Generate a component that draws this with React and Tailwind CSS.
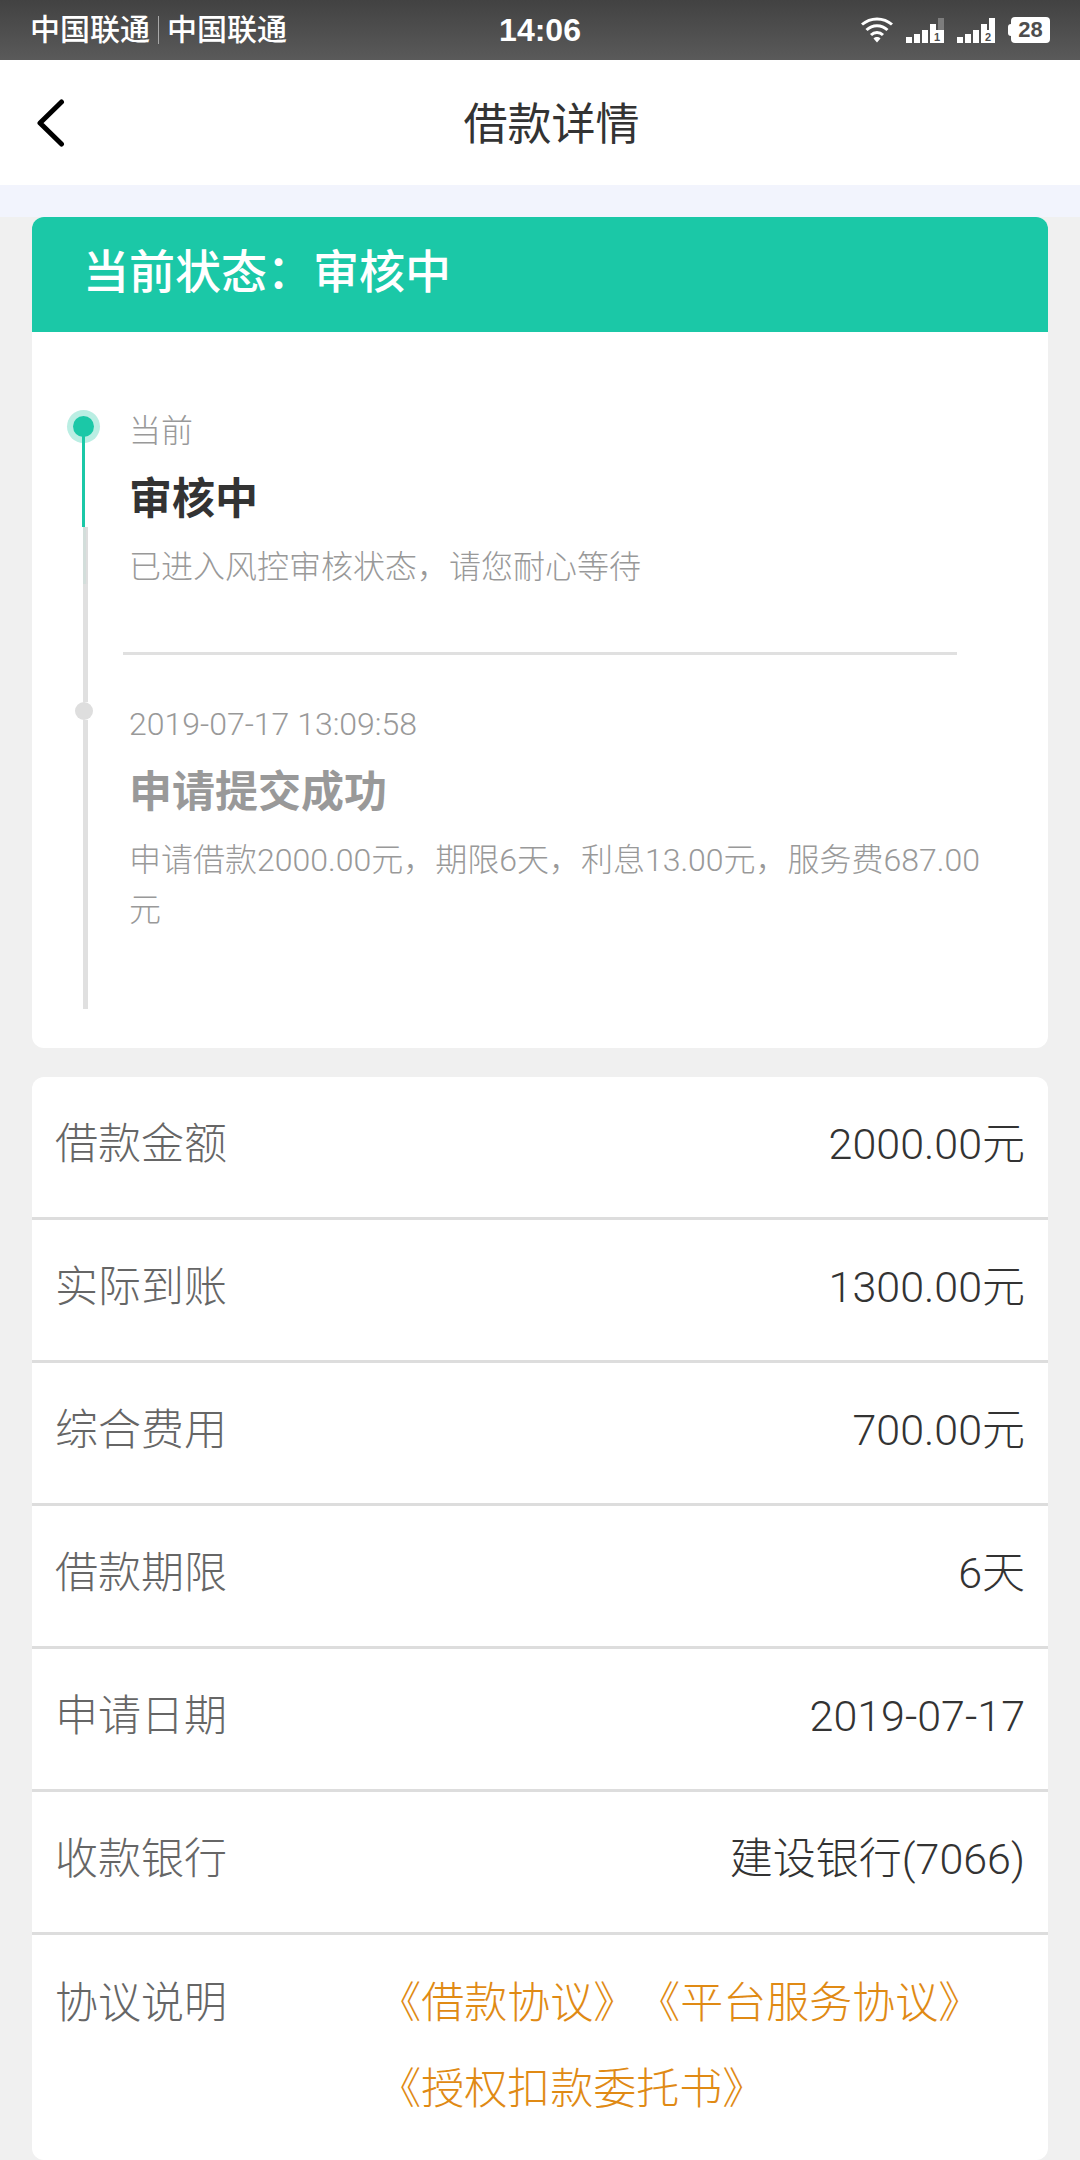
import React from 'react';

const details = [
  { label: '借款金额', value: '2000.00元' },
  { label: '实际到账', value: '1300.00元' },
  { label: '综合费用', value: '700.00元' },
  { label: '借款期限', value: '6天' },
  { label: '申请日期', value: '2019-07-17' },
  { label: '收款银行', value: '建设银行(7066)' },
];

const agreements = ['《借款协议》', '《平台服务协议》', '《授权扣款委托书》'];

const WifiIcon = () => (
  <svg width="32" height="26" viewBox="0 0 32 26" fill="none" stroke="white" strokeWidth="3">
    <path d="M1 7.5C9.5 0 22.5 0 31 7.5" />
    <path d="M5.5 13C11.5 7.2 20.5 7.2 26.5 13" />
    <path d="M10 18C13.5 14.6 18.5 14.6 22 18" />
    <path d="M12.5 21.5C14.5 19.6 17.5 19.6 19.5 21.5L16 25.5Z" fill="white" stroke="none" />
  </svg>
);

const SignalIcon = ({ sim, full }) => (
  <svg width="38" height="25" viewBox="0 0 38 25" fill="white">
    <rect x="0" y="19" width="6" height="6" />
    <rect x="8" y="16" width="6" height="9" />
    <rect x="16" y="12" width="6" height="13" />
    <rect x="24" y="6" width="6" height="19" />
    <rect x="32" y="0" width="6" height="12" fill={full ? 'white' : '#7d7d7d'} />
    <rect x="24" y="12" width="14" height="13" />
    <text
      x="31"
      y="23"
      textAnchor="middle"
      fill="#4d4d4d"
      className="font-['Liberation_Sans',sans-serif] text-[11px] font-bold"
    >
      {sim}
    </text>
  </svg>
);

const StatusBar = () => (
  <div className="grid h-[60px] grid-cols-[1fr_auto_1fr] items-center bg-linear-to-b from-[#424242] to-[#5a5a5a] px-[30px] text-white">
    <div className="flex items-center gap-2 text-[30px] leading-none font-medium">
      <span>中国联通</span>
      <span className="h-[28px] w-px bg-[#a8a8a8]" />
      <span>中国联通</span>
    </div>
    <span className="font-['Liberation_Sans',sans-serif] text-[32px] leading-none font-bold">14:06</span>
    <div className="flex items-center justify-end gap-[13px]">
      <WifiIcon />
      <SignalIcon sim="1" />
      <SignalIcon sim="2" full />
      <div className="flex items-center">
        <span className="h-[12px] w-[3px] rounded-l-sm bg-white" />
        <span className="flex h-[26px] w-[39px] items-center justify-center rounded-sm bg-white font-['Liberation_Sans',sans-serif] text-[22px] leading-none font-bold text-[#4d4d4d]">
          28
        </span>
      </div>
    </div>
  </div>
);

const Header = () => (
  <header className="flex h-[125px] items-center bg-white pr-[42px] pl-[37px]">
    <button type="button" aria-label="返回">
      <svg width="28" height="48" viewBox="0 0 28 48" fill="none" stroke="black" strokeWidth="5" strokeLinecap="round" strokeLinejoin="round">
        <path d="M24.500 3L3 24L24.500 45" />
      </svg>
    </button>
    <h1 className="flex-1 pt-[4px] text-center text-[44px] leading-[60px] font-normal text-[#333]">借款详情</h1>
  </header>
);

const Step = ({ rail, time, title, text, current }) => (
  <li className="flex gap-[23px]">
    <div className="flex w-[33px] shrink-0 flex-col items-center">{rail}</div>
    <div className={current ? 'flex-1 pt-px' : 'flex-1 pt-[44px] pb-[74px]'}>
      <div className="pl-[6px] text-[32px] leading-[50px] text-[#999]">
        <p>{time}</p>
        <h3 className={`text-[43px] leading-[86px] font-bold ${current ? 'text-[#333]' : 'text-[#999]'}`}>{title}</h3>
        <p>{text}</p>
      </div>
      {current && <hr className="mt-[60px] mr-[43px] border-t-3 border-[#e0e0e0]" />}
    </div>
  </li>
);

const App = () => {
  return (
    <div className="min-h-screen bg-[#f0f0f0] font-[Roboto,'Noto_Sans_CJK_SC',sans-serif] font-light">
      <StatusBar />
      <Header />
      <div className="h-[32px] bg-[#f2f4fd]" />

      <main className="mx-[32px] space-y-[29px]">
        {/* Progress */}
        <section className="overflow-hidden rounded-xl bg-white">
          <h2 className="bg-[#1bc8a7] pt-[20px] pb-[25px] pl-[51px] text-[46px] leading-[70px] font-medium text-white">
            当前状态：审核中
          </h2>
          <ol className="pt-[73px] pr-[48px] pb-[39px] pl-[35px]">
            <Step
              current
              time="当前"
              title="审核中"
              text="已进入风控审核状态，请您耐心等待"
              rail={
                <>
                  <span className="mt-[5px] flex size-[33px] items-center justify-center rounded-full bg-[#baeee3]">
                    <span className="size-[21px] rounded-full bg-[#1bc8a7]" />
                  </span>
                  <span className="-mt-[8px] h-[92px] w-[3px] bg-[#1bc8a7]" />
                  <span className="ml-[4px] h-[57px] w-[5px] border-l-3 border-[#d3dedb] bg-[#dedede]" />
                  <span className="ml-[4px] w-[5px] flex-1 bg-[#e0e0e0]" />
                </>
              }
            />
            <Step
              time="2019-07-17 13:09:58"
              title="申请提交成功"
              text="申请借款2000.00元，期限6天，利息13.00元，服务费687.00元"
              rail={
                <>
                  <span className="ml-[4px] h-[47px] w-[5px] bg-[#e0e0e0]" />
                  <span className="size-[18px] rounded-full bg-[#dedede]" />
                  <span className="ml-[4px] w-[5px] flex-1 bg-[#e0e0e0]" />
                </>
              }
            />
          </ol>
        </section>

        {/* Loan details */}
        <dl className="rounded-xl bg-white text-[43px] leading-[86px]">
          {details.map((item) => (
            <div key={item.label} className="flex justify-between border-b-3 border-[#ddd] px-[23px] pt-[24px] pb-[30px]">
              <dt className="text-[#666]">{item.label}</dt>
              <dd className="text-[#333]">{item.value}</dd>
            </div>
          ))}
          <div className="flex justify-between px-[23px] pt-[25px] pb-[28px]">
            <dt className="text-[#666]">协议说明</dt>
            <dd className="flex w-2/3 flex-wrap gap-x-px">
              {agreements.map((name) => (
                <a key={name} href="#" className="text-[#e08a14]">
                  {name}
                </a>
              ))}
            </dd>
          </div>
        </dl>
      </main>
    </div>
  );
};

export default App;
